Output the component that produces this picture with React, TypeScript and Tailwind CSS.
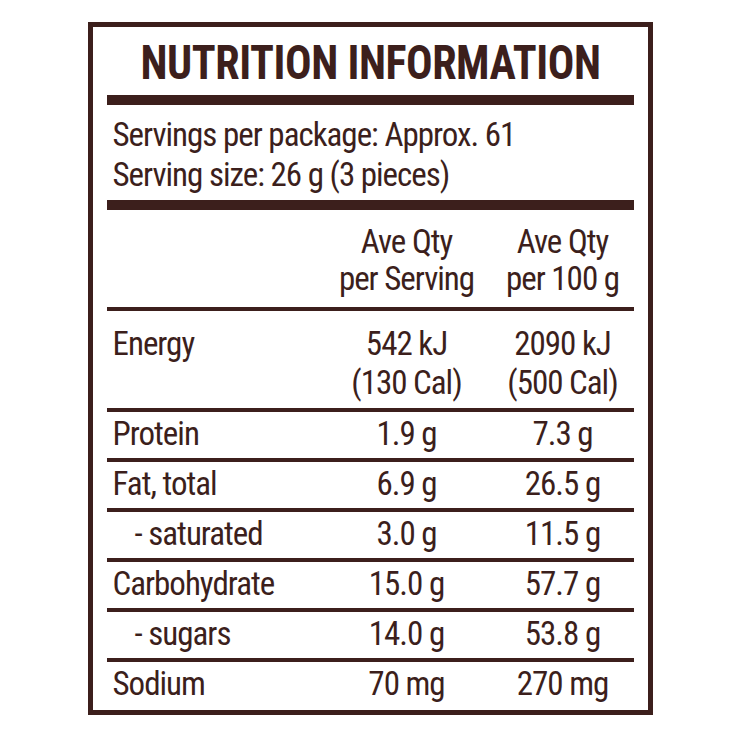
type Row = { name: string; serv: string; per: string; indent?: boolean };

const rows: Row[] = [
  { name: "Protein", serv: "1.9 g", per: "7.3 g" },
  { name: "Fat, total", serv: "6.9 g", per: "26.5 g" },
  { name: "- saturated", serv: "3.0 g", per: "11.5 g", indent: true },
  { name: "Carbohydrate", serv: "15.0 g", per: "57.7 g" },
  { name: "- sugars", serv: "14.0 g", per: "53.8 g", indent: true },
  { name: "Sodium", serv: "70 mg", per: "270 mg" },
];

function Line() {
  return <div className="h-[4px] bg-[#3c1f1c]" />;
}

function Bar() {
  return <div className="h-[10px] bg-[#3c1f1c]" />;
}

export default function App() {
  return (
    <div className="w-[740px] h-[740px] bg-white pt-[22px] font-['Roboto_Condensed','Roboto',sans-serif] text-[#3c1f1c] text-[33px] tracking-[-1px]">
      <div className="mx-auto w-[565px] h-[693px] border-[5px] border-[#3c1f1c] px-[14px] flex flex-col">
        <div className="h-[68px] pt-[11px] text-center font-bold text-[49px] leading-[49px] tracking-[-0.5px] scale-x-[0.9]">
          NUTRITION INFORMATION
        </div>
        <Bar />
        <div className="h-[95px] pt-[10px] pl-[6px] leading-[40px]">
          <div>Servings per package: Approx. 61</div>
          <div>Serving size: 26 g (3 pieces)</div>
        </div>
        <Bar />
        <div className="h-[97px] pt-[13px] leading-[37px] grid grid-cols-[215px_170px_142px] text-center">
          <div />
          <div>
            <div>Ave Qty</div>
            <div>per Serving</div>
          </div>
          <div>
            <div>Ave Qty</div>
            <div>per 100 g</div>
          </div>
        </div>
        <Line />
        <div className="h-[97px] pt-[13px] leading-[39px] grid grid-cols-[215px_170px_142px]">
          <div className="pl-[6px]">Energy</div>
          <div className="text-center">
            <div>542 kJ</div>
            <div>(130 Cal)</div>
          </div>
          <div className="text-center">
            <div>2090 kJ</div>
            <div>(500 Cal)</div>
          </div>
        </div>
        {rows.map((r, i) => (
          <div key={r.name}>
            <Line />
            <div
              className={
                i === rows.length - 1
                  ? "h-[48px] leading-[44px] grid grid-cols-[215px_170px_142px]"
                  : "h-[46px] leading-[44px] grid grid-cols-[215px_170px_142px]"
              }
            >
              <div className={r.indent ? "pl-[28px]" : "pl-[6px]"}>{r.name}</div>
              <div className="text-center">{r.serv}</div>
              <div className="text-center">{r.per}</div>
            </div>
          </div>
        ))}
      </div>
    </div>
  );
}
